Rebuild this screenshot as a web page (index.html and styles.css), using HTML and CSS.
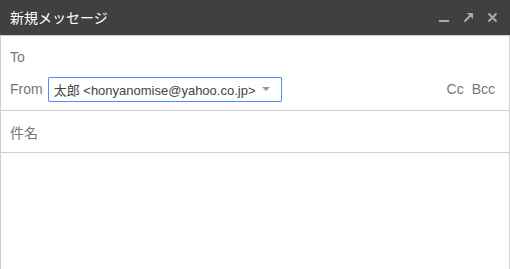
FILE: index.html
```html
<!DOCTYPE html>
<html lang="ja">
<head>
    <meta charset="UTF-8">
    <title>新規メッセージ</title>
    <link rel="stylesheet" href="styles.css">
</head>
<body>
    <div class="compose">
        <div class="header">
            <span class="title">新規メッセージ</span>
            <div class="actions">
                <svg class="icon" width="11" height="11" viewBox="0 0 11 11">
                    <rect x="0" y="8" width="10" height="2" fill="currentColor"/>
                </svg>
                <svg class="icon" width="11" height="11" viewBox="0 0 11 11">
                    <path d="M1.5 9.5 L8 3" stroke="currentColor" stroke-width="2"/>
                    <path d="M4 1 H10 V7 Z" fill="currentColor"/>
                </svg>
                <svg class="icon" width="11" height="11" viewBox="0 0 11 11">
                    <path d="M1.5 1.5 L9.5 9.5 M9.5 1.5 L1.5 9.5" stroke="currentColor" stroke-width="2"/>
                </svg>
            </div>
        </div>

        <div class="fields">
            <div class="row">
                <span class="label">To</span>
            </div>
            <div class="row">
                <span class="label">From</span>
                <div class="select">
                    <span>太郎 &lt;honyanomise@yahoo.co.jp&gt;</span>
                    <span class="caret"></span>
                </div>
                <div class="cc">
                    <span>Cc</span>
                    <span>Bcc</span>
                </div>
            </div>
        </div>

        <div class="subject">
            <span class="label">件名</span>
        </div>

        <div class="body"></div>
    </div>
</body>
</html>
```

FILE: styles.css
```css
* {
    margin: 0;
    padding: 0;
    box-sizing: border-box;
}

body {
    font-family: "Liberation Sans", Arial, "Noto Sans CJK JP", sans-serif;
    background: #fff;
    overflow: hidden;
}

.compose {
    width: 510px;
    height: 269px;
    border-left: 1px solid #cfcfcf;
    border-right: 1px solid #cfcfcf;
    display: flex;
    flex-direction: column;
}

.header {
    height: 36px;
    background: #404040;
    border-bottom: 1px solid #cfcfcf;
    margin: 0 -1px;
    padding: 0 12px 2px 10px;
    display: flex;
    align-items: center;
    justify-content: space-between;
}

.title {
    color: #fff;
    font-size: 14px;
}

.actions {
    display: flex;
    gap: 13px;
    color: #aaa;
    padding-top: 1px;
}

.icon {
    display: block;
}

.fields {
    padding: 8px 14px 8px 9px;
    border-bottom: 1px solid #cfcfcf;
}

.row {
    height: 26px;
    display: flex;
    align-items: center;
}

.row + .row {
    margin-top: 6px;
}

.label {
    color: #777;
    font-size: 14px;
}

.select {
    margin-left: 5px;
    width: 234px;
    height: 25px;
    border: 1px solid #4d90fe;
    border-radius: 1px;
    padding: 0 8px 0 5px;
    display: flex;
    align-items: center;
    justify-content: space-between;
    color: #444;
    font-size: 13px;
}

.caret {
    width: 0;
    height: 0;
    border-left: 4px solid transparent;
    border-right: 4px solid transparent;
    border-top: 4px solid #999;
    margin-right: 3px;
}

.cc {
    margin-left: auto;
    display: flex;
    gap: 8px;
    color: #777;
    font-size: 14px;
}

.subject {
    height: 42px;
    padding: 0 9px;
    display: flex;
    align-items: center;
    border-bottom: 1px solid #cfcfcf;
}

.body {
    flex: 1;
}
```
